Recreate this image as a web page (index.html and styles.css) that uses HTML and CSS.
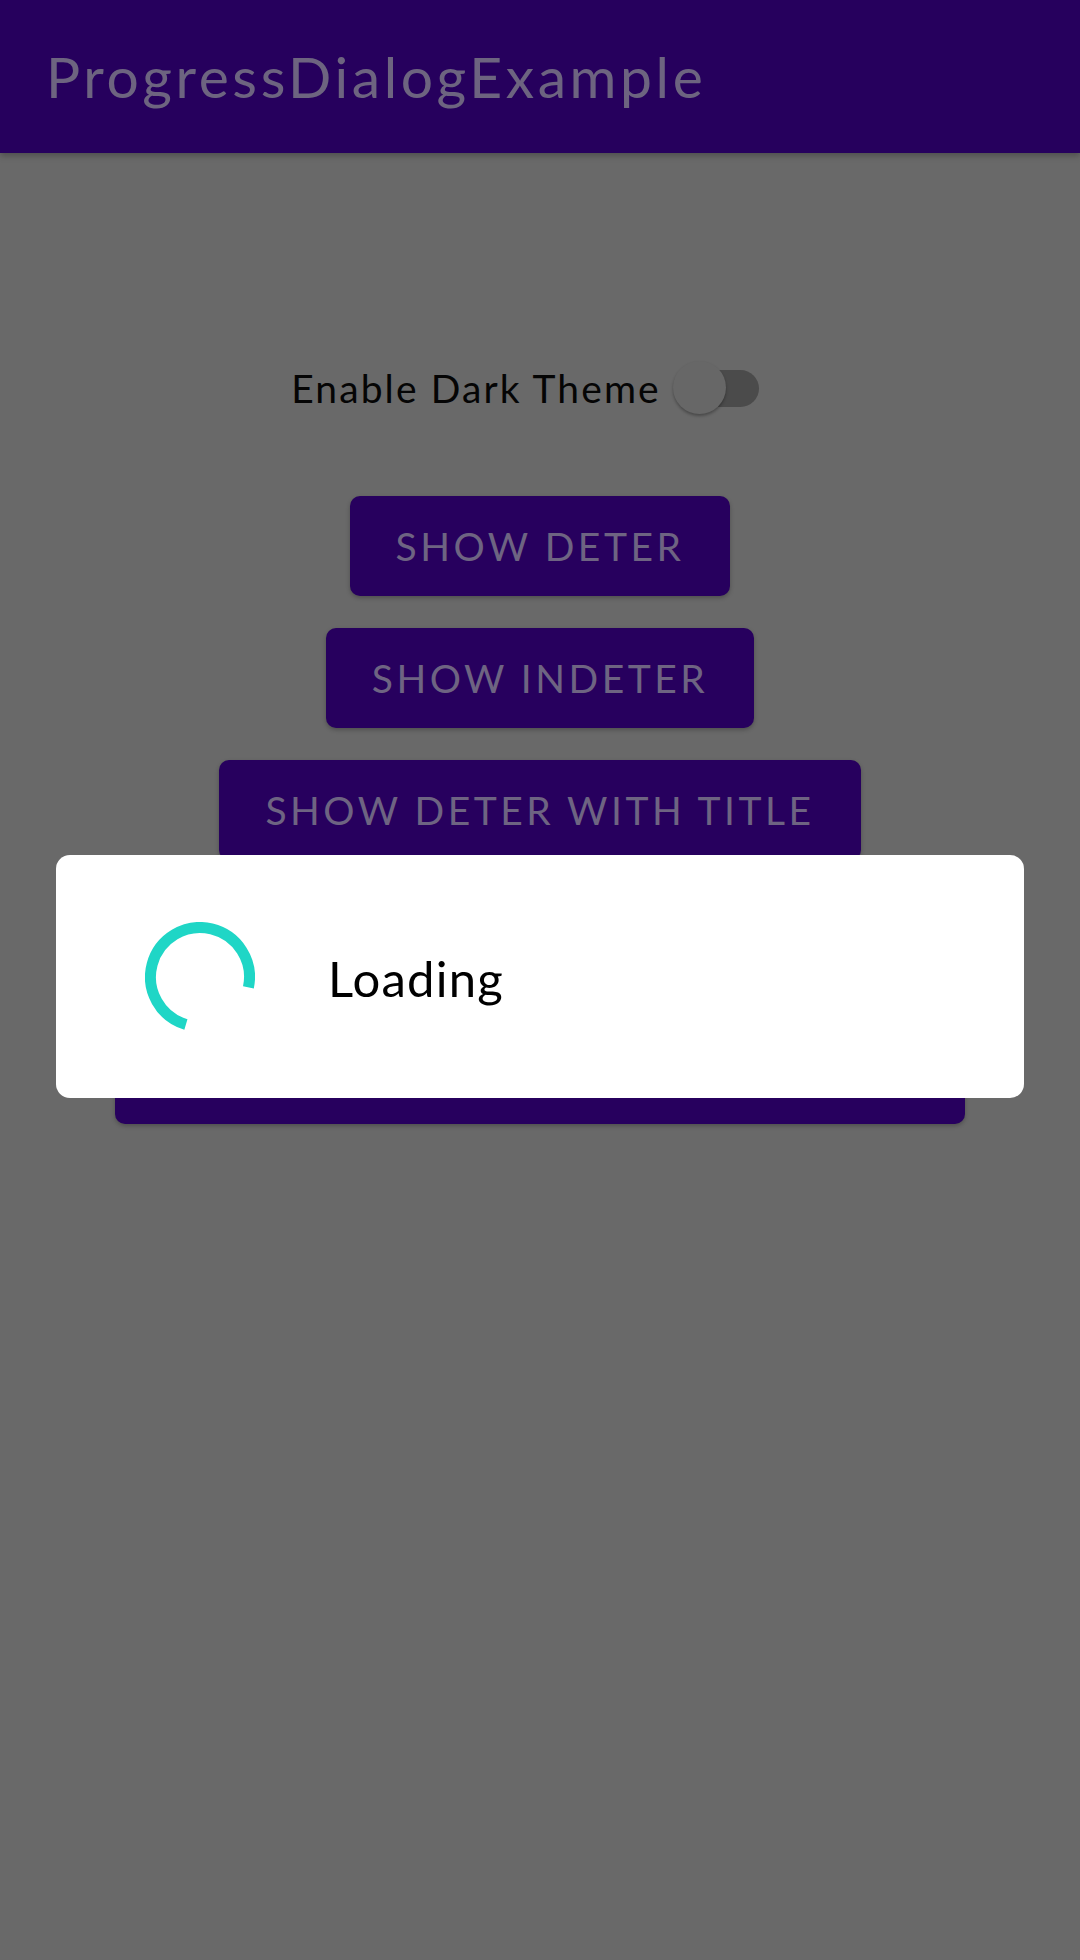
FILE: index.html
```html
<!DOCTYPE html>
<html>
<head>
<meta charset="utf-8">
<link rel="stylesheet" href="styles.css">
</head>
<body>
<div class="screen">
  <header class="appbar">
    <h1 class="title">ProgressDialogExample</h1>
  </header>
  <main class="content">
    <div class="switch-row">
      <span class="switch-label">Enable Dark Theme</span>
      <span class="switch">
        <span class="track"></span>
        <span class="thumb"></span>
      </span>
    </div>
    <div class="buttons">
      <button class="btn">SHOW DETER</button>
      <button class="btn">SHOW INDETER</button>
      <button class="btn">SHOW DETER WITH TITLE</button>
      <button class="btn btn-hidden-4" aria-label="SHOW INDETER WITH TITLE"></button>
      <button class="btn btn-wide" aria-label="SHOW CUSTOM PROGRESS DIALOG"></button>
    </div>
  </main>
  <div class="dialog">
    <svg class="spinner" viewBox="0 0 110 110" width="110" height="110">
      <path d="M103.42 65.29 A49.5 49.5 0 1 0 40.9 102.5" fill="none" stroke="#1fd6c6" stroke-width="11"/>
    </svg>
    <span class="dialog-text">Loading</span>
  </div>
</div>
</body>
</html>
```

FILE: styles.css
```css
html, body {
  margin: 0;
  padding: 0;
}
body {
  width: 1080px;
  height: 1960px;
  background: #696969;
  font-family: Lato, "Open Sans", sans-serif;
  overflow: hidden;
}
.screen {
  position: relative;
  width: 1080px;
  height: 1960px;
}
.appbar {
  height: 153px;
  background: #26005d;
  display: flex;
  align-items: center;
  padding-left: 46px;
  box-shadow: 0 3px 6px rgba(0,0,0,0.25);
  position: relative;
}
.title {
  margin: 0;
  font-weight: 400;
  font-size: 57px;
  letter-spacing: 3.6px;
  color: #6d6480;
  margin-top: -2px;
}
.content {
  display: flex;
  flex-direction: column;
  align-items: center;
}
.switch-row {
  margin-top: 205px;
  display: flex;
  align-items: center;
  gap: 12px;
  padding-right: 30px;
  height: 60px;
}
.switch-label {
  font-size: 39px;
  letter-spacing: 2.1px;
  color: #050505;
}
.switch {
  position: relative;
  width: 86px;
  height: 54px;
  display: block;
}
.track {
  position: absolute;
  left: 14px;
  right: 0;
  top: 9px;
  height: 37px;
  border-radius: 19px;
  background: #4b4b4b;
}
.thumb {
  position: absolute;
  left: 0;
  top: 0;
  width: 53px;
  height: 53px;
  border-radius: 50%;
  background: #676767;
  box-shadow: 0 2px 3px rgba(0,0,0,0.3);
}
.buttons {
  margin-top: 78px;
  display: flex;
  flex-direction: column;
  align-items: center;
  gap: 32px;
}
.btn {
  height: 100px;
  padding: 0 46px;
  border: none;
  border-radius: 10px;
  background: #27005e;
  color: #6e6482;
  font-family: Lato, "Open Sans", sans-serif;
  font-size: 39px;
  letter-spacing: 3.5px;
  box-shadow: 0 2px 4px rgba(0,0,0,0.25);
}
.btn-hidden-4 {
  width: 700px;
}
.btn-wide {
  width: 850px;
}
.dialog {
  position: absolute;
  left: 56px;
  top: 855px;
  width: 968px;
  height: 243px;
  background: #ffffff;
  border-radius: 14px;
  display: flex;
  align-items: center;
}
.spinner {
  margin-left: 89px;
  display: block;
}
.dialog-text {
  margin-left: 73px;
  font-size: 49px;
  letter-spacing: 1.2px;
  color: #000000;
  margin-top: 2px;
}
```
